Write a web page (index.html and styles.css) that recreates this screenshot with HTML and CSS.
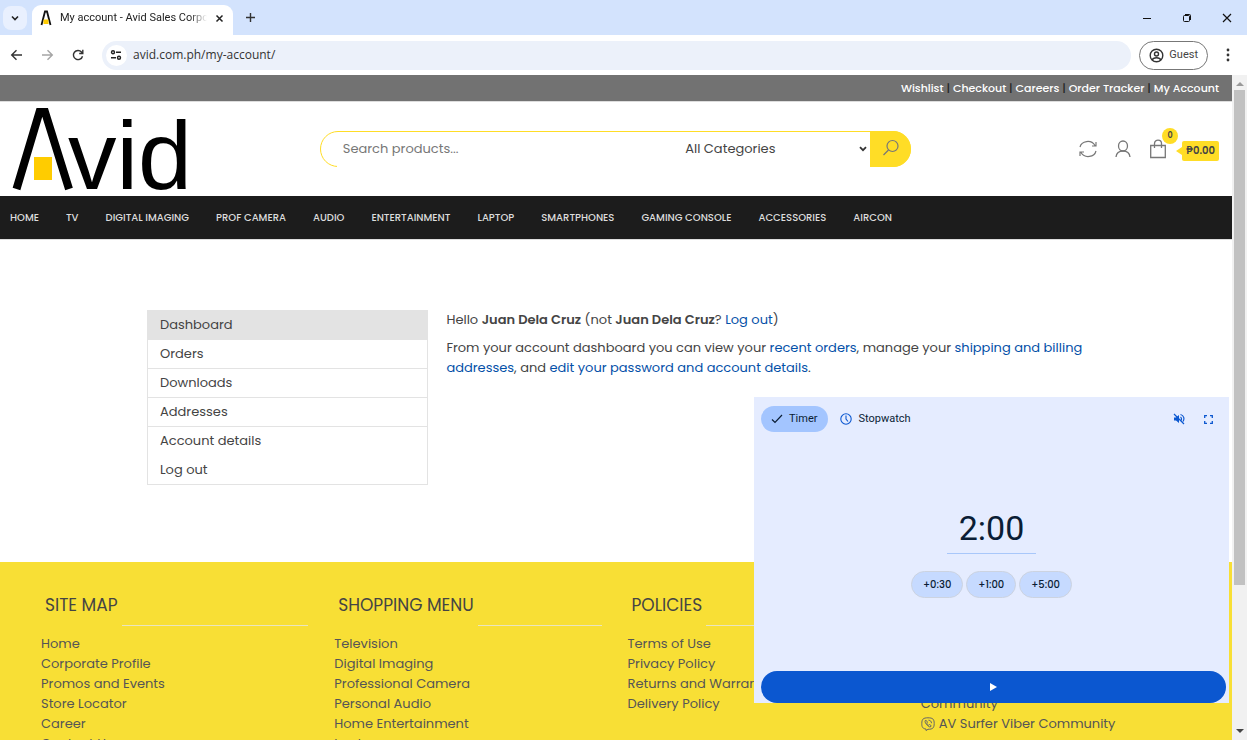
FILE: index.html
```html
<!DOCTYPE html>
<html lang="en">
<head>
<meta charset="utf-8">
<title>My account - Avid Sales Corporation</title>
<link rel="stylesheet" href="styles.css">
</head>
<body>
<div class="tabstrip">
  <button class="tab-search" aria-label="Search tabs"><svg width="10" height="10" viewBox="0 0 10 10"><path d="M2 3.500l3 3 3-3" fill="none" stroke="#222" stroke-width="1.600"/></svg></button>
  <div class="tab">
    <svg class="favicon" width="12" height="16" viewBox="0 0 12 16"><path d="M1.500 15L5 1.500h2L10.500 15" fill="none" stroke="#111" stroke-width="1.800"/><rect x="3.500" y="9.500" width="5" height="4.500" fill="#fc0"/></svg>
    <span class="tab-title">My account - Avid Sales Corporation</span>
    <button class="bare" aria-label="Close tab"><svg width="9" height="9" viewBox="0 0 9 9"><path d="M1.500 1.500l6 6M7.500 1.500l-6 6" stroke="#222" stroke-width="1.500"/></svg></button>
  </div>
  <button class="bare new-tab" aria-label="New tab"><svg width="11" height="11" viewBox="0 0 11 11"><path d="M5.500 1v9M1 5.500h9" stroke="#333" stroke-width="1.400"/></svg></button>
  <div class="window-buttons">
    <button class="bare" aria-label="Minimize"><svg width="10" height="10" viewBox="0 0 10 10"><path d="M1 5.500h8" stroke="#111"/></svg></button>
    <button class="bare" aria-label="Restore"><svg width="10" height="10" viewBox="0 0 10 10"><rect x="1.500" y="2.500" width="6" height="6" rx="1" fill="none" stroke="#111"/><path d="M3 1.500h4.500a1 1 0 0 1 1 1V7" fill="none" stroke="#111"/></svg></button>
    <button class="bare" aria-label="Close"><svg width="10" height="10" viewBox="0 0 10 10"><path d="M1 1l8 8M9 1L1 9" stroke="#111" stroke-width="1.200"/></svg></button>
  </div>
</div>
<div class="toolbar">
  <button class="bare" aria-label="Back"><svg width="13" height="12" viewBox="0 0 13 12"><path d="M12 6H2M6.500 1.200L1.700 6l4.800 4.800" fill="none" stroke="#333" stroke-width="1.400"/></svg></button>
  <button class="bare" aria-label="Forward"><svg width="13" height="12" viewBox="0 0 13 12"><path d="M1 6h10M6.500 1.200L11.300 6l-4.800 4.800" fill="none" stroke="#a5a5a5" stroke-width="1.400"/></svg></button>
  <button class="bare" aria-label="Reload"><svg width="12" height="12" viewBox="0 0 12 12"><path d="M10.500 7.200A4.600 4.600 0 1 1 9.500 3L10.800 4.300M10.800 .8v3.700H7.200" fill="none" stroke="#333" stroke-width="1.400"/></svg></button>
  <div class="address">
    <button class="site-info" aria-label="Site information"><svg width="12" height="12" viewBox="0 0 12 12"><g fill="none" stroke="#222" stroke-width="1.400"><circle cx="3" cy="3.200" r="1.500"/><path d="M6 3.200h5M1 8.700h5"/><circle cx="9" cy="8.700" r="1.500"/></g></svg></button>
    <input class="url" aria-label="Address" value="avid.com.ph/my-account/">
  </div>
  <button class="guest"><svg width="15" height="15" viewBox="0 0 15 15"><g fill="none" stroke="#333" stroke-width="1.400"><circle cx="7.500" cy="7.500" r="6.300"/><circle cx="7.500" cy="6" r="2"/><path d="M3.200 12c1-3 7.600-3 8.600 0"/></g></svg>Guest</button>
  <button class="bare" aria-label="Browser menu"><svg width="4" height="14" viewBox="0 0 4 14" fill="#333"><circle cx="2" cy="2" r="1.400"/><circle cx="2" cy="7" r="1.400"/><circle cx="2" cy="12" r="1.400"/></svg></button>
</div>
<div class="viewport">
  <div class="site">
    <div class="topbar"><a href="#">Wishlist</a> | <a href="#">Checkout</a> | <a href="#">Careers</a> | <a href="#">Order Tracker</a> | <a href="#">My Account</a></div>
    <header class="header">
      <a class="logo" href="#" aria-label="Avid home">
        <svg width="176" height="86" viewBox="0 0 176 86"><path d="M4.500 83L27.500 6h5.500L57 83" fill="none" stroke="#000" stroke-width="8"/><rect x="22" y="51" width="18" height="23" fill="#fc0"/><text class="logo-text" x="56" y="83">vid</text></svg>
      </a>
      <form class="search">
        <input class="search-text" type="text" placeholder="Search products..." aria-label="Search products">
        <div class="category"><select aria-label="Category"><option>All Categories</option></select><svg width="8" height="6" viewBox="0 0 8 6"><path d="M1 1.200l3 3 3-3" fill="none" stroke="#333" stroke-width="1.800"/></svg></div>
        <button class="search-button" type="button" aria-label="Search"><svg width="18" height="18" viewBox="0 0 18 18"><g fill="none" stroke="#777" stroke-width="1.200"><circle cx="10.500" cy="7" r="5.500"/><path d="M6.500 11L1.500 16"/></g></svg></button>
      </form>
      <div class="actions">
        <a href="#" aria-label="Compare"><svg width="18" height="18" viewBox="0 0 18 18"><g fill="none" stroke="#777" stroke-width="1.200"><path d="M1 7C2.500 1 12 -1 16 5.500M17 2v4h-4M17 11c-1.500 6-11 8-15 1.500M1 16v-4h4"/></g></svg></a>
        <a href="#" aria-label="Account"><svg width="16" height="18" viewBox="0 0 16 18"><g fill="none" stroke="#777" stroke-width="1.300"><ellipse cx="8" cy="6" rx="4.500" ry="5"/><path d="M1 17c.5-4 3-6 7-6s6.500 2 7 6"/></g></svg></a>
        <a class="cart" href="#" aria-label="Cart"><svg width="18" height="20" viewBox="0 0 18 20"><g fill="none" stroke="#777" stroke-width="1.300"><path d="M1.700 6.500h14.600v12H1.700zM5.500 9V4.500C5.500 0 12.500 0 12.500 4.500V9"/></g></svg><span class="count">0</span></a>
        <span class="total">₱0.00</span>
      </div>
    </header>
    <nav class="nav">
      <a href="#">HOME</a><a href="#">TV</a><a href="#">DIGITAL IMAGING</a><a href="#">PROF CAMERA</a><a href="#">AUDIO</a><a href="#">ENTERTAINMENT</a><a href="#">LAPTOP</a><a href="#">SMARTPHONES</a><a href="#">GAMING CONSOLE</a><a href="#">ACCESSORIES</a><a href="#">AIRCON</a>
    </nav>
    <main class="account">
      <ul class="menu">
        <li class="active"><a href="#">Dashboard</a></li>
        <li><a href="#">Orders</a></li>
        <li><a href="#">Downloads</a></li>
        <li><a href="#">Addresses</a></li>
        <li class="plain"><a href="#">Account details</a></li>
        <li><a href="#">Log out</a></li>
      </ul>
      <div class="welcome">
        <p>Hello <strong>Juan Dela Cruz</strong> (not <strong>Juan Dela Cruz</strong>? <a href="#">Log out</a>)</p>
        <p>From your account dashboard you can view your <a href="#">recent orders</a>, manage your <a href="#">shipping and billing addresses</a>, and <a href="#">edit your password and account details</a>.</p>
      </div>
    </main>
    <footer class="footer">
      <section><h2>SITE MAP</h2><ul><li><a href="#">Home</a></li><li><a href="#">Corporate Profile</a></li><li><a href="#">Promos and Events</a></li><li><a href="#">Store Locator</a></li><li><a href="#">Career</a></li><li><a href="#">Contact Us</a></li></ul></section>
      <section><h2>SHOPPING MENU</h2><ul><li><a href="#">Television</a></li><li><a href="#">Digital Imaging</a></li><li><a href="#">Professional Camera</a></li><li><a href="#">Personal Audio</a></li><li><a href="#">Home Entertainment</a></li><li><a href="#">Laptop</a></li></ul></section>
      <section><h2>POLICIES</h2><ul><li><a href="#">Terms of Use</a></li><li><a href="#">Privacy Policy</a></li><li><a href="#">Returns and Warranty</a></li><li><a href="#">Delivery Policy</a></li></ul></section>
      <section class="community"><ul><li><a href="#">Community</a></li><li><a href="#"><svg width="14" height="14" viewBox="0 0 14 14"><g fill="none" stroke="#666" stroke-width="1"><path d="M7 .8c5 0 6.200 1.500 6.200 5.700S12 12.300 7 12.300L5 13.500v-1.400C1.500 11.500.8 10 .8 6.500.8 2.300 2 .8 7 .8z"/><path d="M4.300 3.500c-1.300 1.500 2.500 6.500 5 6.500l.9-1.300-1.700-1.200-.8.800C6.500 7.700 6 7 5.700 6l.8-.8-1.200-1.700zM7.500 3.200c2 .2 3 1.300 3 3"/></g></svg>AV Surfer Viber Community</a></li></ul></section>
    </footer>
  </div>
  <div class="scrollbar"><svg width="8" height="5" viewBox="0 0 8 5"><path d="M0 5l4-4 4 4z" fill="#999"/></svg><div class="track"><div class="thumb"></div></div><svg width="8" height="5" viewBox="0 0 8 5"><path d="M0 0l4 4 4-4z" fill="#444"/></svg></div>
</div>
<aside class="timer">
  <div class="timer-top">
    <button class="mode selected"><svg width="12" height="10" viewBox="0 0 12 10"><path d="M1 5.500l3 3L11 1" fill="none" stroke="#0a1d35" stroke-width="1.200"/></svg>Timer</button>
    <button class="mode"><svg width="12" height="12" viewBox="0 0 12 12"><g fill="none" stroke="#0b57d0" stroke-width="1.100"><circle cx="6" cy="6" r="5.200"/><path d="M6 2.500V6l2 2.500"/></g></svg>Stopwatch</button>
    <button class="bare mute" aria-label="Unmute"><svg width="12" height="12" viewBox="0 0 12 12"><path d="M1 4.500h2L6 2v8L3 7.500H1z" fill="#0b57d0"/><path d="M1 1l10 10M7.500 4c1.200.8 1.200 2.500.5 3.500M7.500 1.500c3.500.8 4.200 4.500 2.500 7" fill="none" stroke="#0b57d0" stroke-width="1.200"/></svg></button>
    <button class="bare" aria-label="Full screen"><svg width="9" height="9" viewBox="0 0 9 9"><path d="M.7 3V.7H3M6 .7h2.300V3M8.300 6v2.300H6M3 8.300H.7V6" fill="none" stroke="#0b57d0" stroke-width="1.300"/></svg></button>
  </div>
  <div class="timer-body">
    <input class="time" aria-label="Time" value="2:00">
    <div class="add"><button>+0:30</button><button>+1:00</button><button>+5:00</button></div>
  </div>
  <button class="start" aria-label="Start"><svg width="7" height="8" viewBox="0 0 7 8"><path d="M0 0l7 4-7 4z" fill="#fff"/></svg></button>
</aside>
</body>
</html>
```
FILE: styles.css
```css
* { box-sizing: border-box; }
body {
  margin: 0;
  height: 100vh;
  display: flex;
  flex-direction: column;
  position: relative;
  overflow: hidden;
  font: 13px/20px Poppins, Inter, sans-serif;
  color: #444;
  background: #fff;
}
a { color: inherit; text-decoration: none; }
ul { list-style: none; margin: 0; padding: 0; }
button, input, select { font: inherit; color: inherit; margin: 0; }
svg { display: block; flex: none; }
.bare { border: 0; background: none; padding: 0; }

/* Browser chrome */
.tabstrip {
  flex: none;
  height: 35px;
  display: flex;
  align-items: center;
  background: #d3e3fd;
  font: 11px/16px Roboto, sans-serif;
  color: #222;
}
.tab-search {
  width: 24px;
  height: 24px;
  margin: 0 5px 0 3px;
  padding: 0 7px;
  border: 0;
  border-radius: 8px;
  background: #e9f0fe;
}
.tab {
  width: 201px;
  height: 30px;
  align-self: flex-end;
  display: flex;
  align-items: center;
  gap: 8px;
  padding: 0 9px 4px 8px;
  border-radius: 9px 9px 0 0;
  background: #fff;
}
.tab-title {
  flex: 1;
  overflow: hidden;
  white-space: nowrap;
  mask-image: linear-gradient(to right, #000 88%, transparent);
}
.new-tab { margin-left: 12px; }
.window-buttons { margin-left: auto; display: flex; gap: 30px; padding-right: 15px; }
.toolbar {
  flex: none;
  height: 40px;
  display: flex;
  align-items: center;
  gap: 18px;
  padding: 0 17px 0 10px;
}
.address {
  flex: 1;
  height: 29px;
  display: flex;
  align-items: center;
  gap: 6px;
  margin-right: -10px;
  padding-left: 4px;
  border-radius: 15px;
  background: #ecf1fa;
}
.site-info { width: 21px; height: 21px; padding: 0 4px; border: 0; border-radius: 50%; background: #fff; }
.url { flex: 1; border: 0; padding: 0; background: none; font: 12px/20px "Open Sans", sans-serif; color: #333; }
.guest {
  height: 29px;
  display: flex;
  align-items: center;
  gap: 5px;
  padding: 0 9px;
  border: 1px solid #777;
  border-radius: 15px;
  background: #fff;
  font: 11px/16px Roboto, sans-serif;
}
.viewport { flex: 1; min-height: 0; display: flex; }
.site { flex: 1; min-width: 0; overflow: hidden; }
.scrollbar {
  width: 15px;
  display: flex;
  flex-direction: column;
  align-items: center;
  padding: 6px 0;
  gap: 4px;
  background: #f1f1f1;
}
.track { flex: 1; width: 11px; }
.thumb { height: 78%; background: #c1c1c1; }

/* Store header */
.topbar {
  padding: 3px 13px;
  border-bottom: 1px solid #ddd;
  background: #727272;
  text-align: right;
  font-size: 11px;
  font-weight: 500;
  color: #222;
}
.topbar a { color: #fff; }
.header {
  display: grid;
  grid-template-columns: 1fr 49% 1fr;
  align-items: center;
  padding: 4px 13px 4px 12px;
}
.logo-text { font: 97px "Liberation Sans", sans-serif; fill: #000; }
.search {
  position: relative;
  height: 36px;
  display: flex;
  border: 1px solid #ffdd26;
  border-radius: 18px;
}
.search::after {
  content: "";
  position: absolute;
  left: 16px;
  right: 40px;
  bottom: -1px;
  height: 2px;
  background: #fff;
}
.search-text { flex: 1; min-width: 0; padding: 0 22px; border: 0; background: none; }
.search-text::placeholder { color: #777; }
.category { width: 190px; display: flex; align-items: center; padding-right: 4px; }
.category select { flex: 1; appearance: none; border: 0; padding: 0 4px; background: none; }
.search-button {
  width: 41px;
  margin: -1px;
  padding: 0 0 2px 12px;
  border: 0;
  border-radius: 0 18px 18px 0;
  background: #ffdd26;
}
.actions { display: flex; align-items: center; justify-content: flex-end; gap: 18px; }
.cart { position: relative; }
.count {
  position: absolute;
  left: 13px;
  top: -11px;
  width: 16px;
  height: 16px;
  border-radius: 50%;
  background: #ffdd26;
  font-size: 8px;
  font-weight: 600;
  line-height: 16px;
  text-align: center;
}
.total {
  position: relative;
  margin: 3px 0 0 -3px;
  padding: 0 4px;
  border-radius: 2px;
  background: #ffdd26;
  font-size: 10px;
  font-weight: 600;
}
.total::before {
  content: "";
  position: absolute;
  left: -6px;
  top: 6px;
  border: 4px solid transparent;
  border-width: 4px 6px 4px 0;
  border-right-color: #ffdd26;
}
.nav {
  display: flex;
  gap: 27px;
  padding: 12px 10px 11px;
  border-bottom: 1px solid #ddd;
  background: #1c1c1c;
  font-size: 10px;
  font-weight: 500;
  color: #ddd;
  white-space: nowrap;
}

/* Account page */
.account {
  display: grid;
  grid-template-columns: 30% 1fr;
  gap: 18px;
  max-width: 938px;
  margin: 0 auto;
  padding: 70px 0 77px;
}
.menu { border: 1px solid #e3e3e3; border-bottom: 0; }
.menu li { padding: 4px 12px; border-bottom: 1px solid #e3e3e3; }
.menu .active { background: #e3e3e3; }
.menu .plain { border-color: transparent; }
.welcome p { margin: 0 0 8px; }
.welcome strong { font-weight: 600; }
.welcome a { color: #0450a8; }

/* Footer */
.footer {
  display: grid;
  grid-template-columns: repeat(4, 1fr);
  padding: 22px 18px 40px 41px;
  background: #f8df35;
  color: #555;
}
.footer h2 {
  display: flex;
  gap: 4px;
  height: 42px;
  margin: 0 26px 8px 4px;
  font-size: 17px;
  font-weight: 400;
  line-height: 42px;
  white-space: nowrap;
  color: #444;
}
.footer h2::after { content: ""; flex: 1; border-bottom: 1px solid #e9e5c0; }
.community { padding-top: 110px; }
.community a { display: flex; align-items: center; gap: 4px; }

/* Floating timer */
.timer {
  position: absolute;
  right: 18px;
  bottom: 37px;
  width: 475px;
  height: 306px;
  display: flex;
  flex-direction: column;
  background: #e5ecff;
  color: #0a1d35;
}
.timer-top { display: flex; align-items: center; padding: 9px 16px 0 7px; }
.mode {
  height: 26px;
  display: flex;
  align-items: center;
  gap: 6px;
  padding: 0 11px 0 10px;
  border: 0;
  border-radius: 13px;
  background: none;
  font: 11px/16px Roboto, sans-serif;
}
.mode.selected { background: #a3c5ff; margin-right: 2px; }
.mute { margin: 0 19px 0 auto; }
.timer-body { flex: 1; display: flex; flex-direction: column; align-items: center; padding-top: 70px; }
.time {
  width: 89px;
  height: 52px;
  padding: 0;
  border: 0;
  border-bottom: 1px solid #a8c7fa;
  background: none;
  text-align: center;
  font: 34px/48px Roboto, sans-serif;
}
.add { display: flex; gap: 3px; margin-top: 17px; }
.add button {
  height: 27px;
  padding: 0 11px;
  border: 1px solid #ccd3e0;
  border-radius: 14px;
  background: #c6daff;
  font-size: 10px;
  font-weight: 500;
}
.start { height: 32px; margin: 0 3px 0 7px; display: flex; align-items: center; justify-content: center; border: 0; border-radius: 16px; background: #0b57d0; }
```
